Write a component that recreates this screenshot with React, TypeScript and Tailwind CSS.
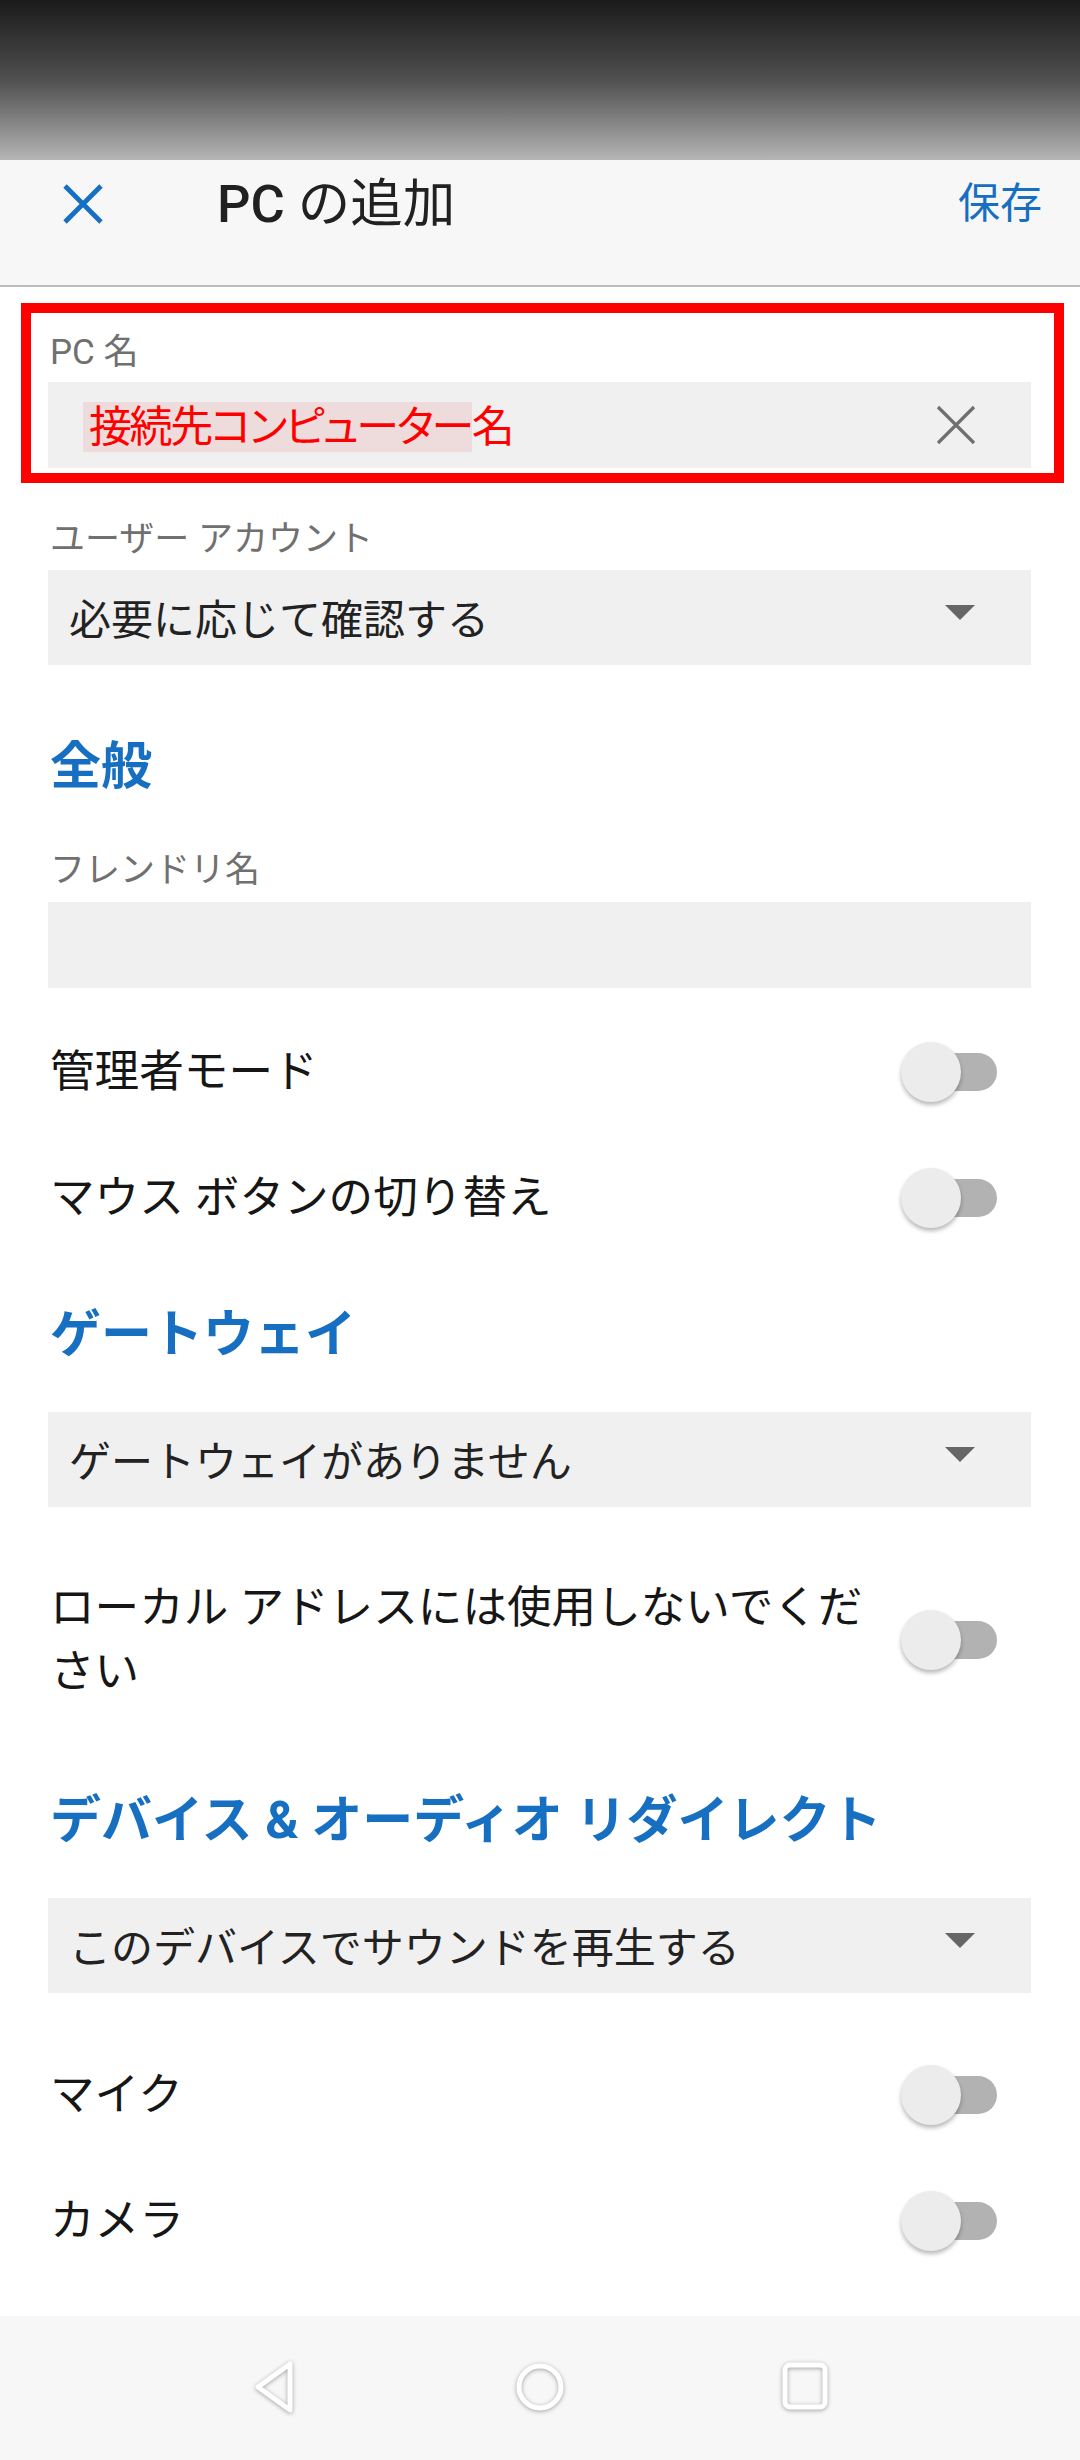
import React from 'react';

const FONT = "font-['Roboto','Noto_Sans_CJK_JP',sans-serif]";

const CloseIcon = ({ className, stroke, width }: { className: string; stroke: string; width: number }) => (
    <svg viewBox="0 0 42 42" className={className} fill="none">
        <path d="M3 3 L39 39 M39 3 L3 39" stroke={stroke} strokeWidth={width} strokeLinecap="butt" />
    </svg>
);

const Caret = () => (
    <svg viewBox="0 0 30 15" className="w-[30px] h-[15px] -mt-[10px]">
        <polygon points="0,0 30,0 15,15" fill="#666666" />
    </svg>
);

const Toggle = () => (
    <div className="relative w-[96px] h-[62px] mr-[34px] shrink-0">
        <div className="absolute right-0 top-[12px] w-[88px] h-[38px] rounded-full bg-[#b2b2b2]" />
        <div className="absolute left-0 top-[1px] w-[60px] h-[60px] rounded-full bg-[#ececec] shadow-[0_3px_4px_rgba(0,0,0,0.28)]" />
    </div>
);

const Label = ({ children }: { children: React.ReactNode }) => (
    <div className="text-[35px] leading-[42px] text-[#707070]">{children}</div>
);

const Dropdown = ({ text, className }: { text: string; className: string }) => (
    <div className={`h-[95px] bg-[#f0f0f0] flex items-center justify-between pl-[21px] pr-[56px] ${className}`}>
        <span className="text-[42px] leading-[50px] text-[#222222] pt-[6px]">{text}</span>
        <Caret />
    </div>
);

const Heading = ({ children, className }: { children: React.ReactNode; className: string }) => (
    <div className={`text-[51px] leading-[60px] font-bold text-[#176fc1] ${className}`}>{children}</div>
);

const ToggleRow = ({ label, className }: { label: string; className?: string }) => (
    <div className={`h-[126px] flex items-center justify-between ${className ?? ''}`}>
        <span className="text-[44.6px] leading-[56px] text-[#161616] pl-[2px]">{label}</span>
        <Toggle />
    </div>
);

export default function App() {
    return (
        <div className={`w-[1080px] h-[2460px] flex flex-col bg-white ${FONT}`}>
            {/* status bar */}
            <div className="h-[160px] shrink-0 bg-gradient-to-b from-[#1b1b1b] via-[#505050] to-[#b6b6b6]" />

            {/* app bar */}
            <div className="h-[127px] shrink-0 bg-[#f7f7f7] border-b-2 border-[#bdbdbd] pt-[16px]">
                <div className="h-[56px] flex items-center">
                    <CloseIcon className="w-[42px] h-[42px] ml-[62px]" stroke="#1570c4" width={4.8} />
                    <span className="ml-[113px] text-[52.5px] leading-[56px] text-[#212121]">
                        <span className="font-medium">PC</span> の追加
                    </span>
                    <span className="ml-auto mr-[38px] text-[42px] leading-[56px] text-[#176fc1]">保存</span>
                </div>
            </div>

            {/* form */}
            <div className="flex-1 overflow-hidden pl-[48px] pr-[49px]">
                <div className="mt-[16px] -ml-[27px] -mr-[33px] border-[10px] border-[#ff0000] pl-[17px] pr-[23px] pt-[19px] pb-[5px]">
                    <div className="pl-[2px]">
                        <Label>PC 名</Label>
                    </div>
                    <div className="mt-[8px] h-[86px] bg-[#f0f0f0] flex items-center justify-between pl-[35px] pr-[54px]">
                        <span className="text-[43px] leading-[50px] tracking-[-2.4px] text-[#ff0000] [font-feature-settings:'palt'] mt-[4px]">
                            <span className="bg-[#eedcdc] pl-[6px]">接続先コンピューター</span>名
                        </span>
                        <CloseIcon className="w-[42px] h-[42px]" stroke="#6f6f6f" width={3.2} />
                    </div>
                </div>

                <div className="mt-[36px] pl-[2px]">
                    <Label>ユーザー アカウント</Label>
                </div>
                <Dropdown text="必要に応じて確認する" className="mt-[9px]" />

                <Heading className="mt-[72px] pl-[2px]">全般</Heading>

                <div className="mt-[53px] pl-[2px]">
                    <Label>フレンドリ名</Label>
                </div>
                <div className="mt-[10px] h-[86px] bg-[#f0f0f0]" />

                <ToggleRow label="管理者モード" className="mt-[21px]" />
                <ToggleRow label="マウス ボタンの切り替え" />

                <Heading className="mt-[44px] pl-[2px]">ゲートウェイ</Heading>
                <Dropdown text="ゲートウェイがありません" className="mt-[47px]" />

                <div className="mt-[69px] flex items-center justify-between gap-[16px]">
                    <span className="flex-1 text-[44.6px] leading-[64px] text-[#161616] pl-[2px]">
                        ローカル アドレスには使用しないでください
                    </span>
                    <Toggle />
                </div>

                <Heading className="mt-[87px] pl-[2px]">デバイス &amp; オーディオ リダイレクト</Heading>
                <Dropdown text="このデバイスでサウンドを再生する" className="mt-[47px]" />

                <ToggleRow label="マイク" className="mt-[39px]" />
                <ToggleRow label="カメラ" />
            </div>

            {/* navigation bar */}
            <div className="h-[144px] shrink-0 bg-[#f7f7f7] flex items-center justify-center gap-[215px] pb-[2px]">
                <svg viewBox="0 0 50 54" className="w-[50px] h-[54px] drop-shadow-[0_1px_2px_rgba(0,0,0,0.35)]">
                    <path d="M40 4 L40 50 L8 27 Z" fill="none" stroke="#ffffff" strokeWidth="5" strokeLinejoin="round" />
                </svg>
                <svg viewBox="0 0 50 54" className="w-[50px] h-[54px] drop-shadow-[0_1px_2px_rgba(0,0,0,0.35)]">
                    <circle cx="25" cy="27" r="21" fill="none" stroke="#ffffff" strokeWidth="5" />
                </svg>
                <svg viewBox="0 0 50 54" className="w-[50px] h-[54px] drop-shadow-[0_1px_2px_rgba(0,0,0,0.35)]">
                    <rect x="5" y="5" width="40" height="42" rx="5" fill="none" stroke="#ffffff" strokeWidth="5" />
                </svg>
            </div>
        </div>
    );
}
